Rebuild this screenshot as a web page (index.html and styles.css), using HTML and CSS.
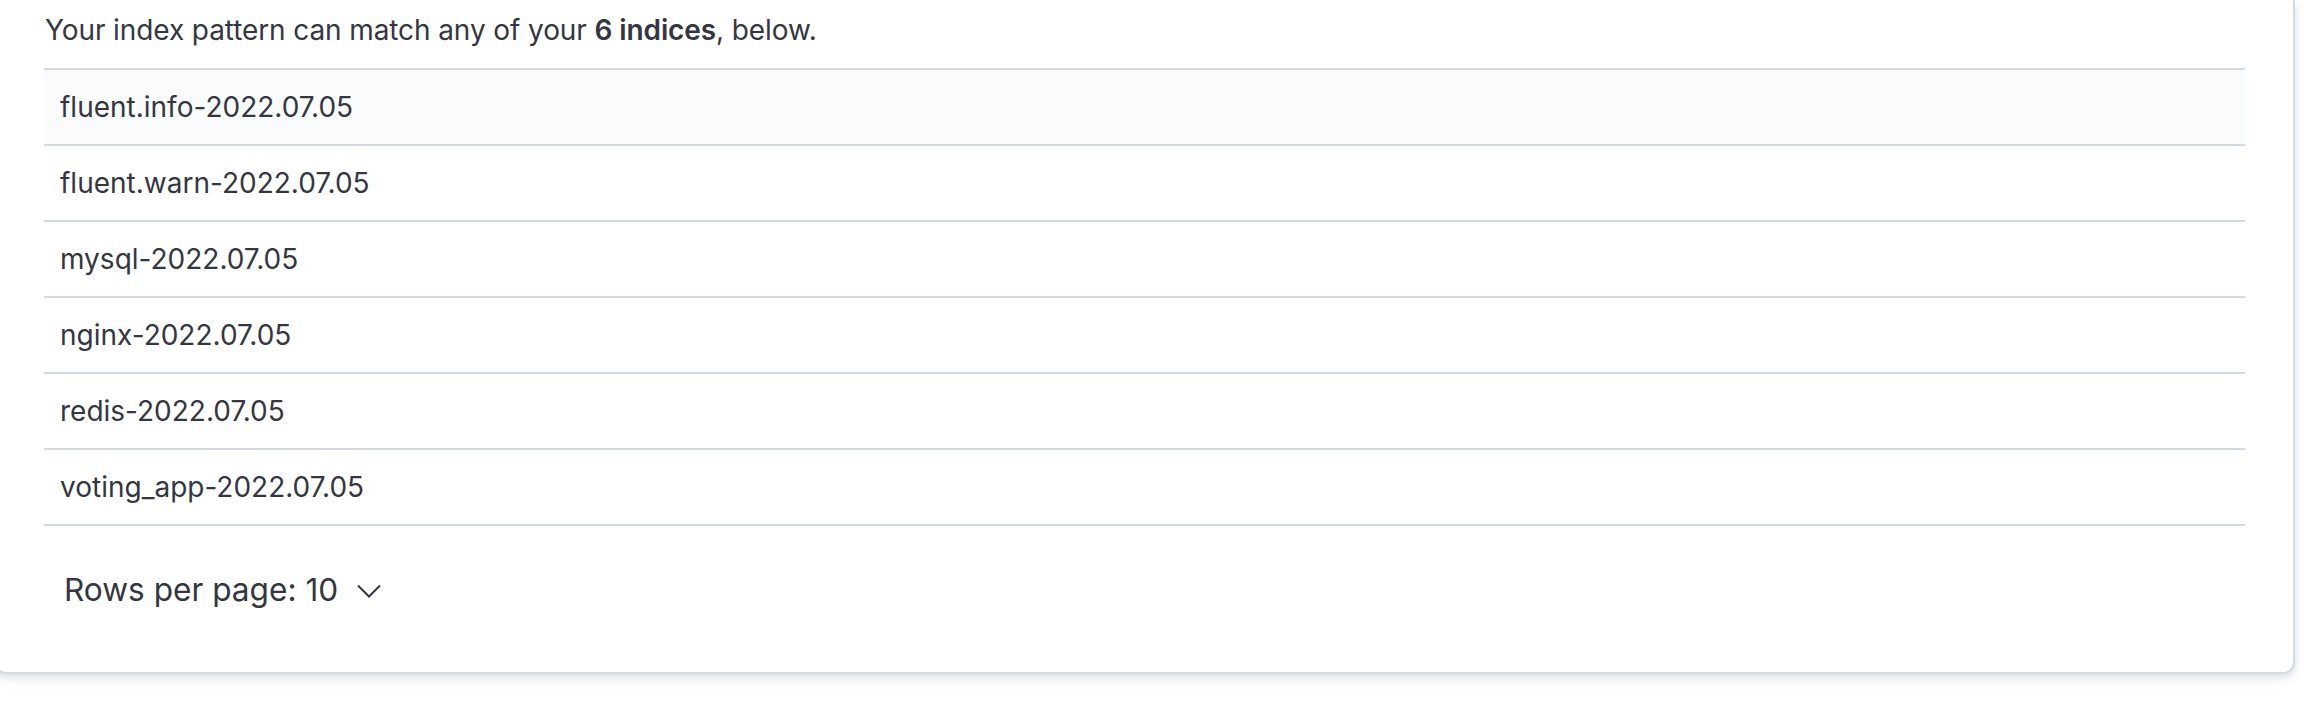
FILE: index.html
```html
<!DOCTYPE html>
<html>
<head>
<meta charset="utf-8">
<link rel="stylesheet" href="styles.css">
</head>
<body>
<div class="card">
  <p class="intro">Your index pattern can match any of your <strong>6 indices</strong>, below.</p>
  <div class="table">
    <div class="row hover">fluent.info-2022.07.05</div>
    <div class="row">fluent.warn-2022.07.05</div>
    <div class="row">mysql-2022.07.05</div>
    <div class="row">nginx-2022.07.05</div>
    <div class="row">redis-2022.07.05</div>
    <div class="row">voting_app-2022.07.05</div>
  </div>
  <div class="footer">
    <button class="rows-btn">
      <span>Rows per page: 10</span>
      <svg class="chev" width="24" height="14" viewBox="0 0 24 14"><path d="M1 1.5 L12 12.5 L23 1.5" fill="none" stroke="#343741" stroke-width="2"/></svg>
    </button>
  </div>
</div>
</body>
</html>
```
FILE: styles.css
```css
html, body {
  margin: 0;
  padding: 0;
  background: #ffffff;
}
body {
  font-family: Inter, "Noto Sans", sans-serif;
  color: #343741;
  overflow: hidden;
  width: 2310px;
  height: 708px;
}
.card {
  margin-left: -6px;
  width: 2301px;
  box-sizing: border-box;
  padding: 9px 48px 0 48px;
  height: 674px;
  background: #fff;
  border: 2px solid #d3dae6;
  border-top: none;
  border-radius: 0 0 12px 12px;
  box-shadow: 0 3px 6px rgba(152, 162, 179, 0.25), 0 6px 12px rgba(152, 162, 179, 0.12);
}
.intro {
  margin: 0 0 17px 0;
  font-size: 28px;
  line-height: 42px;
  padding-left: 1px;
  letter-spacing: -0.1px;
}
.intro strong {
  font-weight: 600;
}
.table {
  border-top: 2px solid #d3dae6;
}
.row {
  font-size: 28px;
  line-height: 42px;
  padding: 16px 16px;
  border-bottom: 2px solid #d3dae6;
}
.row.hover {
  background: #fafbfd;
}
.footer {
  padding-top: 40px;
  display: flex;
  align-items: center;
}
.rows-btn {
  display: flex;
  align-items: center;
  gap: 19px;
  background: none;
  border: none;
  padding: 0 18px 0 20px;
  font-family: inherit;
  font-size: 31.6px;
  line-height: 48px;
  color: #343741;
  cursor: pointer;
}
.chev {
  display: block;
  margin-top: 2px;
}
```
